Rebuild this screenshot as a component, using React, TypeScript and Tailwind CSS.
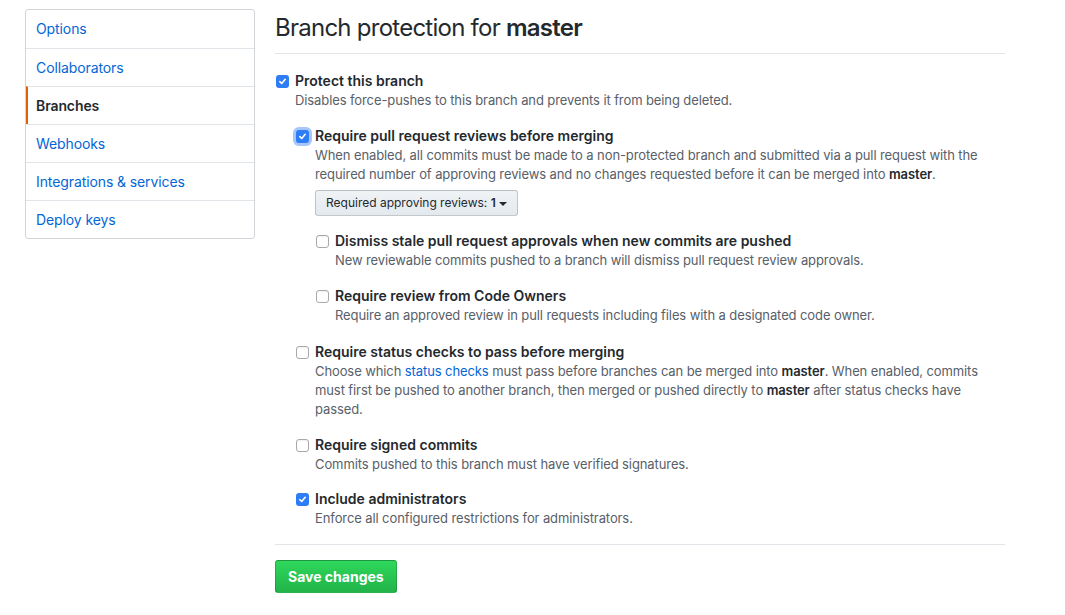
import type { ReactNode } from 'react';

const navItems = ['Options', 'Collaborators', 'Branches', 'Webhooks', 'Integrations & services', 'Deploy keys'];

function Box({ checked, focus }: { checked?: boolean; focus?: boolean }) {
  if (checked) {
    return (
      <span
        className={`flex h-[13px] w-[13px] items-center justify-center rounded-[3px] bg-[#2f7df6] ${
          focus ? 'shadow-[0_0_0_3px_rgba(93,152,245,0.55)]' : ''
        }`}
      >
        <svg width="9" height="9" viewBox="0 0 9 9" fill="none">
          <path d="M1.8 4.7 L3.7 6.5 L7.2 2.3" stroke="white" strokeWidth="1.6" strokeLinecap="round" strokeLinejoin="round" />
        </svg>
      </span>
    );
  }
  return <span className="block h-[13px] w-[13px] rounded-[3px] border border-[#a9a9a9] bg-white shadow-[inset_0_1px_1px_rgba(0,0,0,0.06)]" />;
}

function Check({
  title,
  checked,
  focus,
  className = '',
  children,
}: {
  title: string;
  checked?: boolean;
  focus?: boolean;
  className?: string;
  children?: ReactNode;
}) {
  return (
    <div className={`relative pl-5 ${className}`}>
      <span className="absolute left-px top-[4px]">
        <Box checked={checked} focus={focus} />
      </span>
      <div className="text-[14px] font-semibold leading-[20px] text-[#24292e]">{title}</div>
      {children}
    </div>
  );
}

function Note({ children }: { children: ReactNode }) {
  return <p className="text-[13px] leading-[19px] tracking-[-0.1px] text-[#586069]">{children}</p>;
}

export default function App() {
  return (
    <div className="min-h-[615px] bg-white font-['Inter','Liberation_Sans',sans-serif] text-[#24292e]">
      <div className="flex gap-5 pl-[25px] pt-[9px]">
        <nav className="w-[230px] shrink-0 self-start rounded-[3px] border border-[#d1d5da]">
          {navItems.map((item, i) => {
            const active = item === 'Branches';
            return (
              <div
                key={item}
                className={`flex h-[38px] items-center px-[10px] pb-px text-[14px] tracking-[-0.1px] ${i > 0 ? 'border-t border-[#e1e4e8]' : ''} ${
                  active ? 'border-l-2 border-l-[#e36209] pl-[8px] font-semibold text-[#24292e]' : 'text-[#0366d6]'
                }`}
              >
                {item}
              </div>
            );
          })}
        </nav>

        <main className="w-[730px] pt-px">
          <div className="border-b border-[#e1e4e8] pb-[7px]">
            <h2 className="text-[24px] font-normal leading-[36px] tracking-[-0.75px]">
              Branch protection for <strong className="font-semibold">master</strong>
            </h2>
          </div>

          <Check title="Protect this branch" checked className="mt-[17px]">
            <Note>Disables force-pushes to this branch and prevents it from being deleted.</Note>

            <Check title="Require pull request reviews before merging" checked focus className="mt-4">
              <Note>
                When enabled, all commits must be made to a non-protected branch and submitted via a pull request with the
                <br />
                required number of approving reviews and no changes requested before it can be merged into{' '}
                <strong className="font-semibold text-[#24292e]">master</strong>.
              </Note>
              <button className="mt-[6px] flex h-[26px] items-center rounded-[3px] border border-[rgba(27,31,35,0.2)] bg-gradient-to-b from-[#f0f3f6] to-[#e4e9ee] px-[10px] text-[12px] text-[#24292e]">
                Required approving reviews:&nbsp;<b className="font-semibold">1</b>
                <span className="ml-[3px] mt-px h-0 w-0 border-x-[4px] border-t-[4px] border-x-transparent border-t-[#24292e]" />
              </button>

              <Check title="Dismiss stale pull request approvals when new commits are pushed" className="mt-[15px]">
                <Note>New reviewable commits pushed to a branch will dismiss pull request review approvals.</Note>
              </Check>
              <Check title="Require review from Code Owners" className="mt-4">
                <Note>Require an approved review in pull requests including files with a designated code owner.</Note>
              </Check>
            </Check>

            <Check title="Require status checks to pass before merging" className="mt-[17px]">
              <Note>
                Choose which <a className="text-[#0366d6]">status checks</a> must pass before branches can be merged into{' '}
                <strong className="font-semibold text-[#24292e]">master</strong>. When enabled, commits
                <br />
                must first be pushed to another branch, then merged or pushed directly to{' '}
                <strong className="font-semibold text-[#24292e]">master</strong> after status checks have
                <br />
                passed.
              </Note>
            </Check>

            <Check title="Require signed commits" className="mt-4">
              <Note>Commits pushed to this branch must have verified signatures.</Note>
            </Check>

            <Check title="Include administrators" checked className="mt-[15px]">
              <Note>Enforce all configured restrictions for administrators.</Note>
            </Check>
          </Check>

          <div className="mt-4 border-t border-[#e1e4e8] pt-[15px]">
            <button className="h-[33px] rounded-[3px] border border-[rgba(27,31,35,0.2)] bg-gradient-to-b from-[#2ed85c] to-[#22b348] px-[12px] text-[14px] font-bold text-white">
              Save changes
            </button>
          </div>
        </main>
      </div>
    </div>
  );
}
